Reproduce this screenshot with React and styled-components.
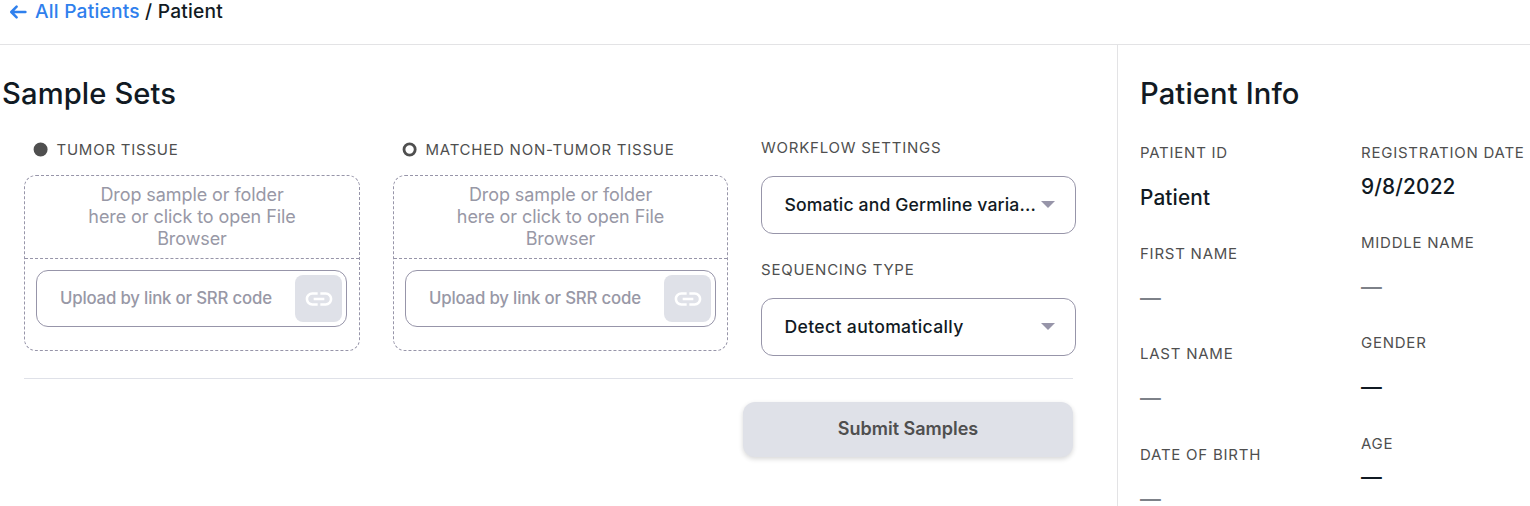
import React from "react";
import styled, { createGlobalStyle } from "styled-components";

const GlobalStyle = createGlobalStyle`
  *, *::before, *::after { box-sizing: border-box; }
  body {
    margin: 0;
    background: #fff;
    color: #111a23;
    font-family: Inter, "Liberation Sans", sans-serif;
    overflow: hidden;
  }
`;

const Page = styled.div`
  display: flex;
  flex-direction: column;
  height: 506px;
  overflow: hidden;
`;

const Header = styled.header`
  display: flex;
  align-items: center;
  height: 45px;
  padding: 0 0 21px 9px;
  border-bottom: 1px solid #e3e3e5;
  font-size: 19.2px;
  font-weight: 500;
  line-height: 23px;
  letter-spacing: 0.2px;
  white-space: pre;
`;

const BackLink = styled.a`
  display: flex;
  align-items: center;
  gap: 8px;
  color: #2f80ed;
  text-decoration: none;
`;

const Body = styled.div`
  display: flex;
  flex: 1;
  min-height: 0;
`;

const Main = styled.main`
  width: 1117px;
  padding: 31px 0 0 2px;
`;

const Heading = styled.h1`
  margin: 0;
  font-size: 29.2px;
  font-weight: 500;
  line-height: 36px;
  letter-spacing: 0.1px;
`;

const SampleForm = styled.div`
  display: flex;
  gap: 33px;
  padding: 26px 0 0 22px;
`;

const Column = styled.section`
  width: ${(p) => p.$width}px;
`;

const Label = styled.div`
  display: flex;
  align-items: center;
  height: 20px;
  font-size: 15px;
  line-height: 20px;
  letter-spacing: 0.76px;
  color: #4f4f4f;
  white-space: nowrap;
`;

const SampleLabel = styled(Label)`
  gap: 9.2px;
  margin: 2px 0 15px 9.3px;
`;

const Dot = styled.svg`
  width: 14px;
  height: 14px;
  margin-top: -1px;
  overflow: visible;
`;

const DropZone = styled.div`
  height: 176px;
  border: 1px dashed #9795a9;
  border-radius: 12px;
`;

const DropText = styled.div`
  height: 83px;
  padding: 8px 60px 0;
  border-bottom: 1px dashed #9795a9;
  font-size: 18px;
  line-height: 22px;
  letter-spacing: -0.08px;
  text-align: center;
  color: #9898a6;
`;

const LinkField = styled.div`
  display: flex;
  align-items: center;
  justify-content: space-between;
  width: 311px;
  height: 57px;
  margin: 11px 0 0 11px;
  padding: 0 4px 0 23px;
  border: 1px solid #9795a9;
  border-radius: 12px;
  font-size: 16.8px;
  font-weight: 500;
  letter-spacing: -0.18px;
  color: #9898a6;
  white-space: nowrap;
`;

const FieldText = styled.span`
  padding-bottom: 2px;
`;

const LinkButton = styled.span`
  display: flex;
  align-items: center;
  justify-content: center;
  width: 47px;
  height: 47px;
  border-radius: 8px;
  background: #dfe1e8;
`;

const Select = styled.div`
  display: flex;
  align-items: center;
  justify-content: space-between;
  height: 58px;
  margin: 18px 0 26px;
  padding: 0 20px 0 22.5px;
  border: 1px solid #9795a9;
  border-radius: 12px;
  font-size: 17.6px;
  font-weight: 500;
  letter-spacing: ${(p) => p.$tracking}px;
  white-space: nowrap;
`;

const Caret = styled.span`
  margin-bottom: 2px;
  border: 7px solid transparent;
  border-top-color: #9795a9;
  border-bottom: 0;
`;

const Footer = styled.div`
  display: flex;
  justify-content: flex-end;
  width: 1049px;
  margin: -4px 0 0 22px;
  padding-top: 23px;
  border-top: 1px solid #dfe1e8;
`;

const SubmitButton = styled.button`
  width: 330px;
  height: 55px;
  padding: 0 0 2px;
  border: 0;
  border-radius: 12px;
  background: #dfe1e8;
  box-shadow: 0 2px 5px rgba(0, 0, 0, 0.16);
  font: 600 18px Inter, sans-serif;
  color: #4f4f4f;
`;

const InfoPanel = styled.aside`
  flex: 1;
  min-width: 0;
  padding: 31px 0 0 22px;
  border-left: 1px solid #e3e3e5;
`;

const InfoGrid = styled.div`
  display: flex;
  padding-top: 31px;
`;

const InfoColumn = styled.div`
  width: ${(p) => p.$width}px;
`;

const Field = styled.div`
  height: ${(p) => p.$height}px;
`;

const Value = styled.div`
  margin-top: ${(p) => (p.$close ? 12 : 23)}px;
  font-size: 20.8px;
  font-weight: 500;
  line-height: ${(p) => (p.$empty ? 21 : 23)}px;
  letter-spacing: 0.14px;
  color: ${(p) => (p.$muted ? "#7d8188" : "#111a23")};
`;

const BackArrow = () => (
  <svg width="18" height="14" viewBox="0 0 18 14" fill="none" stroke="currentColor" strokeWidth="2.5" strokeLinecap="round" strokeLinejoin="round">
    <path d="M7.6 1.7 2.3 7l5.3 5.3M2.7 7h13.7" />
  </svg>
);

const LinkIcon = () => (
  <svg width="32" height="32" viewBox="0 0 24 24" fill="#fff">
    <path d="M3.9 12c0-1.71 1.39-3.1 3.1-3.1h4V7H7c-2.76 0-5 2.24-5 5s2.24 5 5 5h4v-1.9H7c-1.71 0-3.1-1.39-3.1-3.1zM8 13h8v-2H8v2zm9-6h-4v1.9h4c1.71 0 3.1 1.39 3.1 3.1s-1.39 3.1-3.1 3.1h-4V17h4c2.76 0 5-2.24 5-5s-2.24-5-5-5z" />
  </svg>
);

const SampleUpload = ({ title, filled, width }) => (
  <Column $width={width}>
    <SampleLabel>
      <Dot viewBox="0 0 14 14">
        <circle cx="7.6" cy="6.5" r="5.6" fill={filled ? "#4f4f4f" : "#fff"} stroke="#4f4f4f" strokeWidth="2.8" />
      </Dot>
      {title}
    </SampleLabel>
    <DropZone>
      <DropText>Drop sample or folder<br />here or click to open File<br />Browser</DropText>
      <LinkField>
        <FieldText>Upload by link or SRR code</FieldText>
        <LinkButton><LinkIcon /></LinkButton>
      </LinkField>
    </DropZone>
  </Column>
);

const InfoField = ({ label, value, muted, close, height }) => (
  <Field $height={height}>
    <Label>{label}</Label>
    <Value $muted={muted} $close={close} $empty={!value}>{value || "—"}</Value>
  </Field>
);

export default function App() {
  return (
    <>
      <GlobalStyle />
      <Page>
        <Header>
          <BackLink><BackArrow />All Patients</BackLink> / Patient
        </Header>
        <Body>
          <Main>
            <Heading>Sample Sets</Heading>
            <SampleForm>
              <SampleUpload title="TUMOR TISSUE" filled width={336} />
              <SampleUpload title="MATCHED NON-TUMOR TISSUE" width={335} />
              <Column $width={315}>
                <Label>WORKFLOW SETTINGS</Label>
                <Select $tracking={0.15}><FieldText>Somatic and Germline varia...</FieldText><Caret /></Select>
                <Label>SEQUENCING TYPE</Label>
                <Select $tracking={0.33}><FieldText>Detect automatically</FieldText><Caret /></Select>
              </Column>
            </SampleForm>
            <Footer><SubmitButton>Submit Samples</SubmitButton></Footer>
          </Main>
          <InfoPanel>
            <Heading>Patient Info</Heading>
            <InfoGrid>
              <InfoColumn $width={221}>
                <InfoField label="PATIENT ID" value="Patient" height={101} />
                <InfoField label="FIRST NAME" muted height={100} />
                <InfoField label="LAST NAME" muted height={101} />
                <InfoField label="DATE OF BIRTH" muted height={100} />
              </InfoColumn>
              <InfoColumn $width={169}>
                <InfoField label="REGISTRATION DATE" value="9/8/2022" close height={90} />
                <InfoField label="MIDDLE NAME" muted height={100} />
                <InfoField label="GENDER" height={101} />
                <InfoField label="AGE" close height={90} />
              </InfoColumn>
            </InfoGrid>
          </InfoPanel>
        </Body>
      </Page>
    </>
  );
}
